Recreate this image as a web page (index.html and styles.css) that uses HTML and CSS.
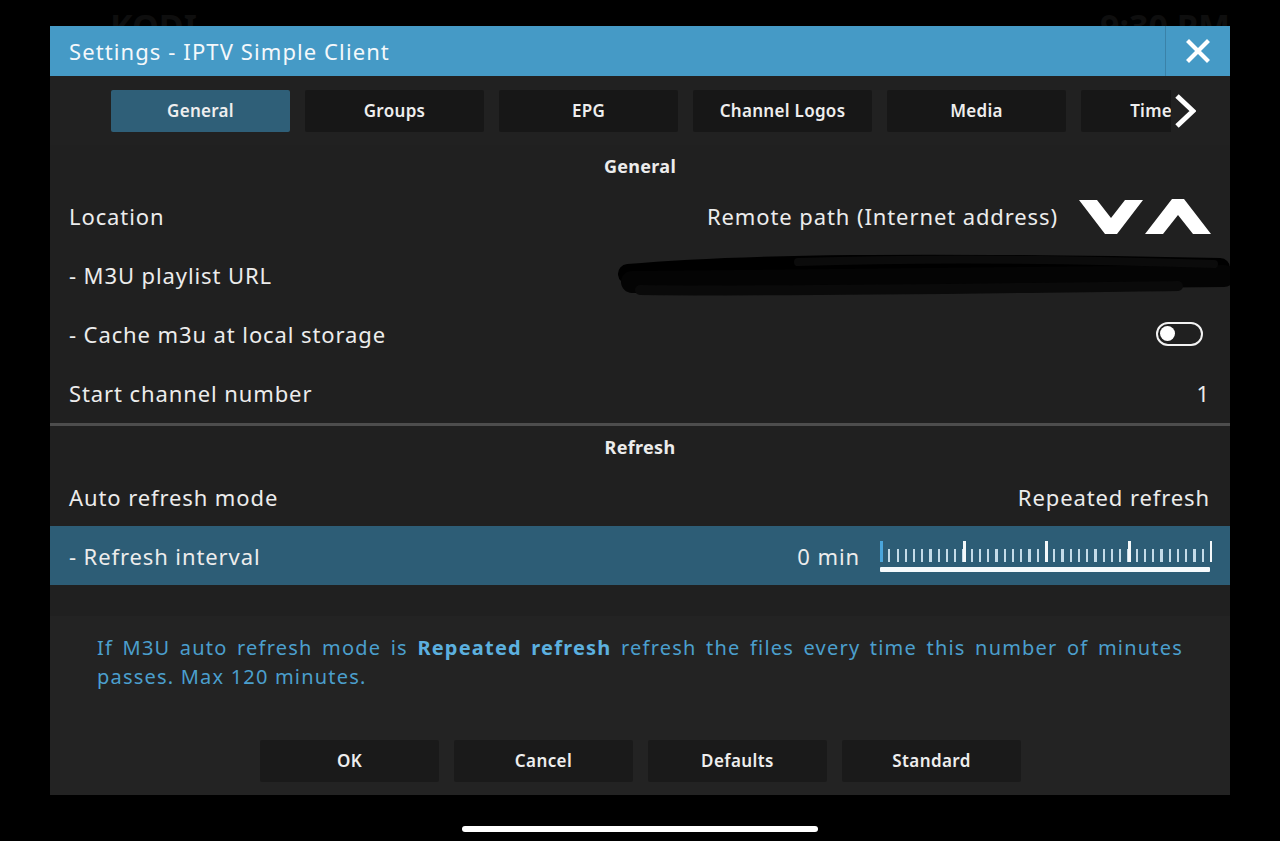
FILE: index.html
```html
<!DOCTYPE html>
<html lang="en">

<head>
    <meta charset="UTF-8">
    <meta name="viewport" content="width=device-width, initial-scale=1.0">
    <title>Settings - IPTV Simple Client</title>
    <link rel="stylesheet" href="styles.css">
</head>

<body>
    <div class="backdrop">
        <span class="bg-logo">KODI</span>
        <span class="bg-clock">9:30 PM</span>
    </div>

    <div class="dialog">
        <div class="header">
            <div class="title">Settings - IPTV Simple Client</div>
            <div class="close">
                <svg width="24" height="24" viewBox="0 0 24 24">
                    <path d="M3 3 L21 21 M21 3 L3 21" stroke="#fff" stroke-width="4.2" stroke-linecap="square" />
                </svg>
            </div>
        </div>

        <div class="tabbar">
            <div class="tabs">
                <div class="tab active">General</div>
                <div class="tab">Groups</div>
                <div class="tab">EPG</div>
                <div class="tab">Channel Logos</div>
                <div class="tab">Media</div>
                <div class="tab">Timeshift</div>
            </div>
            <svg class="tab-next" width="22" height="34" viewBox="0 0 22 34">
                <path d="M3 2 L19 17 L3 32" fill="none" stroke="#fff" stroke-width="5" stroke-linejoin="miter" />
            </svg>
        </div>

        <div class="list">
            <div class="section">General</div>
            <div class="row">
                <span class="label">Location</span>
                <span class="value">Remote path (Internet address)
                    <svg class="spin" width="134" height="38" viewBox="0 0 134 38">
                        <path d="M1 3 H19 L33 21 L47 3 H65 L39 37 H27 Z" fill="#fff" />
                        <path d="M67 37 H85 L100 18 L115 37 H133 L106 2 H94 Z" fill="#fff" />
                    </svg>
                </span>
            </div>
            <div class="row">
                <span class="label">- M3U playlist URL</span>
                <svg class="scribble" width="612" height="50" viewBox="0 0 612 50">
                    <path d="M10 22 C120 12 300 10 602 16" stroke="#000" stroke-width="20" fill="none" stroke-linecap="round" />
                    <path d="M14 30 C200 28 400 26 606 24" stroke="#040404" stroke-width="22" fill="none" stroke-linecap="round" />
                    <path d="M22 38 C180 40 380 36 560 34" stroke="#0a0a0a" stroke-width="10" fill="none" stroke-linecap="round" />
                    <path d="M180 10 C300 6 420 6 596 12" stroke="#0b0b0b" stroke-width="8" fill="none" stroke-linecap="round" />
                </svg>
            </div>
            <div class="row">
                <span class="label">- Cache m3u at local storage</span>
                <span class="toggle"><span class="knob"></span></span>
            </div>
            <div class="row">
                <span class="label">Start channel number</span>
                <span class="value">1</span>
            </div>

            <div class="divider"></div>

            <div class="section">Refresh</div>
            <div class="row">
                <span class="label">Auto refresh mode</span>
                <span class="value">Repeated refresh</span>
            </div>
            <div class="row selected">
                <span class="label">- Refresh interval</span>
                <span class="value">0 min
                    <span class="slider">
                        <span class="ticks"></span>
                        <span class="bar"></span>
                    </span>
                </span>
            </div>
        </div>

        <div class="info">
            <p>If M3U auto refresh mode is <b>Repeated refresh</b> refresh the files every time this number of minutes passes. Max 120 minutes.</p>
            <div class="buttons">
                <div class="btn">OK</div>
                <div class="btn">Cancel</div>
                <div class="btn">Defaults</div>
                <div class="btn">Standard</div>
            </div>
        </div>
    </div>

    <div class="home-bar"></div>
</body>

</html>
```

FILE: styles.css
```css
body{
    margin: 0;
    height: 841px;
    overflow: hidden;
    background-color: #000;
    font-family: "Noto Sans", "Open Sans", sans-serif;
    color: #ececec;
    position: relative;
}
.backdrop{
    display: flex;
    justify-content: space-between;
    padding: 0 50px 0 110px;
    height: 26px;
    overflow: hidden;
    color: #0e0e0e;
    font-size: 34px;
    font-weight: bold;
    line-height: 52px;
}
.dialog{
    width: 1180px;
    height: 769px;
    margin-left: 50px;
    background-color: #202020;
    display: flex;
    flex-direction: column;
}
.header{
    height: 50px;
    display: flex;
    background-color: #459ac6;
}
.title{
    flex: 1;
    padding-left: 19px;
    font-size: 22px;
    letter-spacing: 1.1px;
    line-height: 50px;
    color: #f4f8fb;
}
.close{
    width: 64px;
    border-left: 1px solid #3a82a8;
    display: flex;
    align-items: center;
    justify-content: center;
}
.tabbar{
    height: 69px;
    position: relative;
    padding-left: 61px;
    display: flex;
    align-items: center;
    background-color: #212121;
}
.tabs{
    display: flex;
    gap: 15px;
    width: 1060px;
    overflow: hidden;
}
.tab{
    flex: 0 0 179px;
    height: 42px;
    line-height: 41px;
    text-align: center;
    background-color: #171717;
    border-radius: 2px;
    font-size: 17px;
    letter-spacing: 0.3px;
    font-weight: 600;
    color: #eee;
}
.tab.active{
    background-color: #2f5f78;
}
.tab-next{
    position: absolute;
    left: 1124px;
    top: 18px;
}
.list{
    display: flex;
    flex-direction: column;
}
.section{
    height: 41px;
    line-height: 42px;
    text-align: center;
    font-size: 18px;
    letter-spacing: 0.3px;
    font-weight: bold;
}
.row{
    height: 59px;
    padding: 0 20px 0 19px;
    display: flex;
    align-items: center;
    justify-content: space-between;
    font-size: 22px;
    letter-spacing: 0.9px;
}
.row.selected{
    background-color: #2d5d76;
}
.value{
    display: flex;
    align-items: center;
    gap: 20px;
}
.spin{
    margin-right: -2px;
}
.scribble{
    margin-right: -20px;
    margin-top: 4px;
}
.toggle{
    width: 41px;
    height: 20px;
    border: 2px solid #f2f2f2;
    border-radius: 12px;
    margin-right: 7px;
    display: flex;
    align-items: center;
    padding-left: 2px;
}
.knob{
    width: 15px;
    height: 15px;
    border-radius: 50%;
    background-color: #fff;
}
.divider{
    height: 3px;
    margin-top: 1px;
    background-color: #4d4d4d;
}
.slider{
    width: 332px;
    height: 33px;
    display: flex;
    flex-direction: column;
    justify-content: flex-end;
    gap: 5px;
    margin-right: -2px;
}
.ticks{
    height: 21px;
    background:
        linear-gradient(#4aa6dc, #4aa6dc) no-repeat 0 0 / 3px 21px,
        repeating-linear-gradient(to right, #f4f8fa 0 3px, transparent 3px 82.5px) no-repeat 0 0 / 100% 21px,
        repeating-linear-gradient(to right, #c4dbe8 0 2px, transparent 2px 8.25px) no-repeat 0 100% / 100% 13px;
}
.bar{
    height: 5px;
    margin-right: 2px;
    background-color: #f6fafc;
    border-radius: 1px;
}
.info{
    flex: 1;
    margin-top: 31px;
    background-color: #232323;
    padding: 17px 47px 0 47px;
    display: flex;
    flex-direction: column;
}
.info p{
    margin: 0;
    height: 107px;
    font-size: 20px;
    line-height: 29px;
    text-align: justify;
    color: #4b9fcd;
    letter-spacing: 1.2px;
}
.info b{
    color: #5cb0df;
}
.buttons{
    display: flex;
    gap: 15px;
    padding-left: 163px;
}
.btn{
    width: 179px;
    height: 42px;
    line-height: 41px;
    text-align: center;
    background-color: #1a1a1a;
    border-radius: 2px;
    font-size: 17px;
    letter-spacing: 0.4px;
    font-weight: 600;
    color: #eee;
}
.home-bar{
    position: absolute;
    left: 462px;
    top: 826px;
    width: 356px;
    height: 6px;
    border-radius: 3px;
    background-color: #fff;
}
```
